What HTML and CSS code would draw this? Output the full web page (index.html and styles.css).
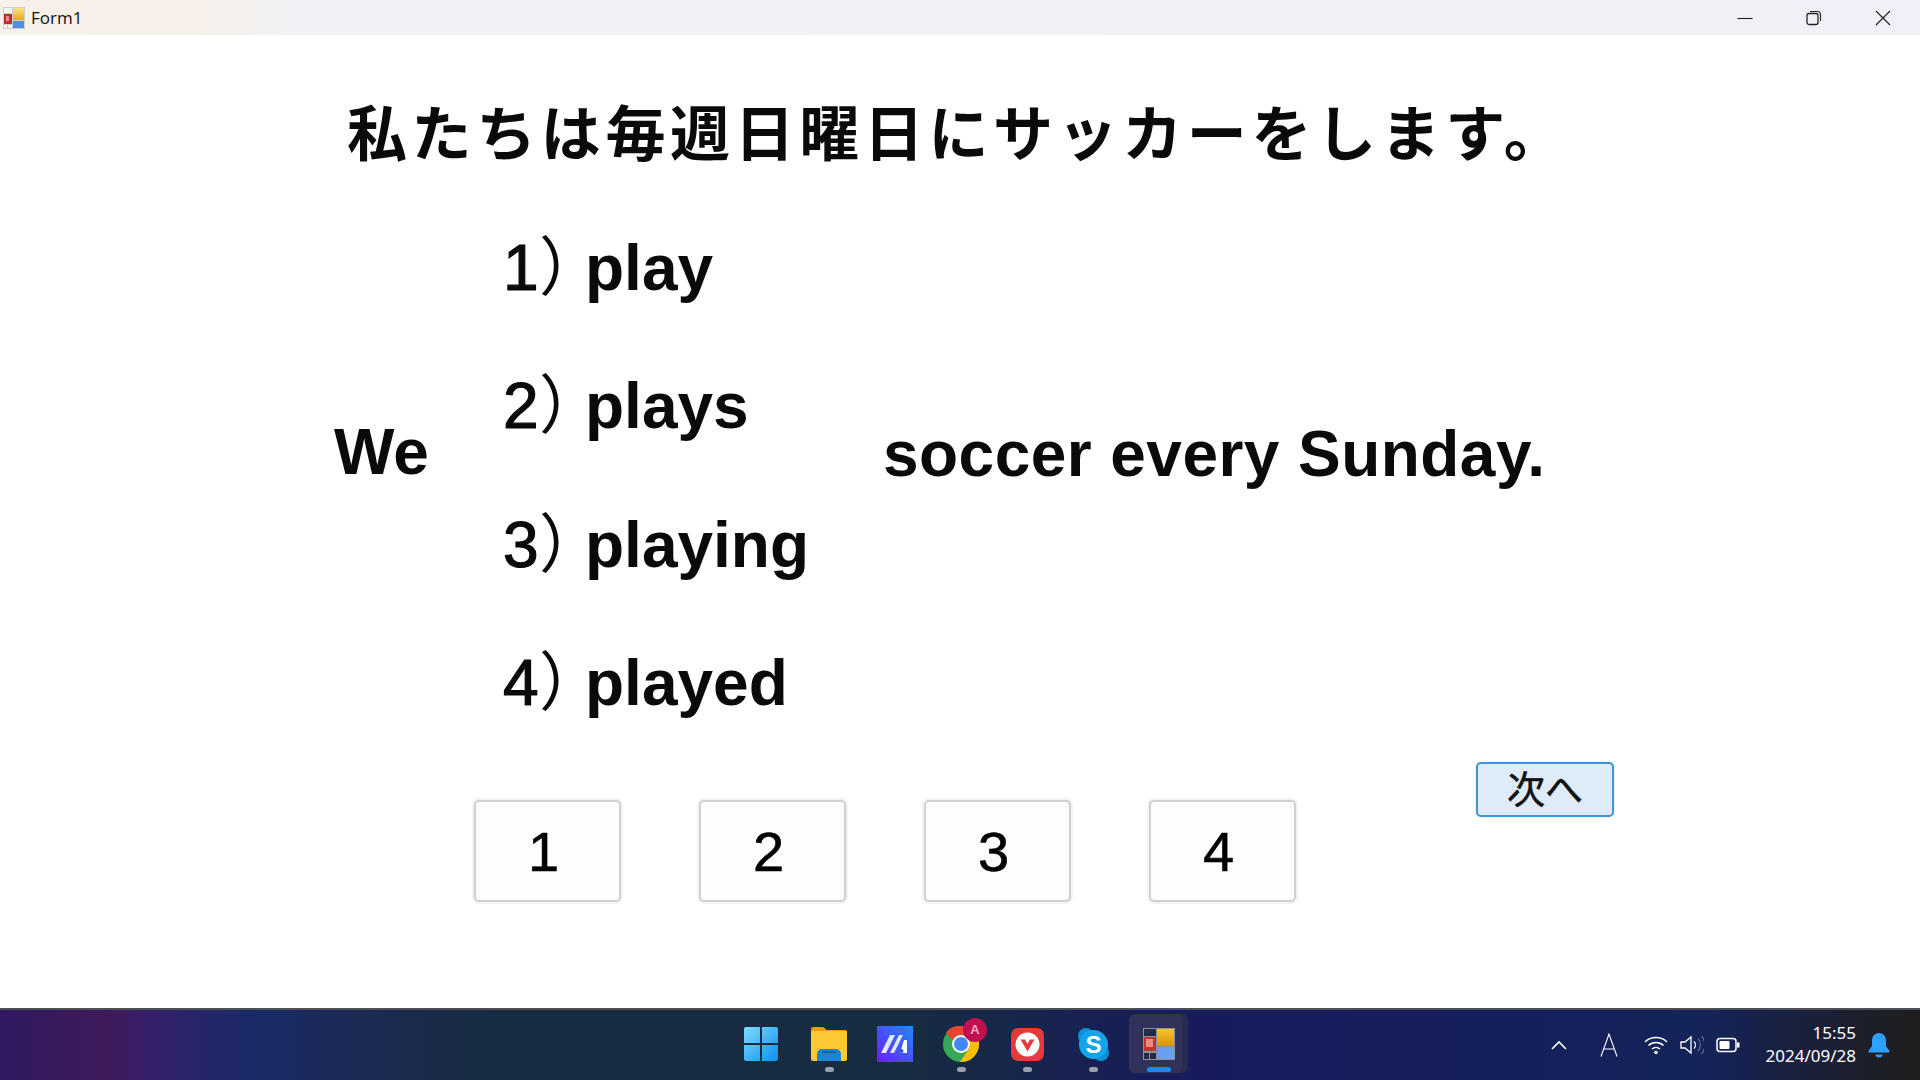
FILE: index.html
```html
<!DOCTYPE html>
<html lang="ja">
<head>
<meta charset="utf-8">
<title>Form1</title>
<link rel="stylesheet" href="styles.css">
</head>
<body>
<div class="window">
  <header class="titlebar">
    <div class="title-left">
      <svg class="form-icon" width="22" height="22" viewBox="0 0 22 22">
        <defs><linearGradient id="fy" x1="0" y1="0" x2="0" y2="1"><stop offset="0" stop-color="#fbe08a"/><stop offset="1" stop-color="#e8a818"/></linearGradient></defs>
        <rect x="0" y="0" width="22" height="22" fill="#cfcfcf"/>
        <rect x="1" y="1" width="8" height="5" fill="#f4f4f4"/>
        <rect x="1" y="7" width="8" height="10" fill="#b8322a"/>
        <rect x="3" y="9" width="3" height="5" fill="#e88"/>
        <rect x="1" y="18" width="3" height="3" fill="#f4f4f4"/>
        <rect x="5" y="18" width="4" height="3" fill="#f4f4f4"/>
        <rect x="10" y="1" width="11" height="12" fill="url(#fy)"/>
        <rect x="10" y="14" width="11" height="7" fill="#4f8fe0"/>
      </svg>
      <span class="title-text">Form1</span>
    </div>
    <div class="win-controls">
      <svg width="16" height="16" viewBox="0 0 16 16"><path d="M0.5 8.5h15" stroke="#222" stroke-width="1.1" fill="none"/></svg>
      <svg width="16" height="16" viewBox="0 0 16 16"><rect x="1" y="3.5" width="11" height="11" rx="2" stroke="#222" stroke-width="1.3" fill="none"/><path d="M4 1.5h7.5a3 3 0 0 1 3 3V11" stroke="#222" stroke-width="1.1" fill="none"/></svg>
      <svg width="16" height="16" viewBox="0 0 16 16"><path d="M1 1l14 14M15 1L1 15" stroke="#222" stroke-width="1.2" fill="none"/></svg>
    </div>
  </header>

  <main class="form">
    <h1 class="question">私たちは毎週日曜日にサッカーをします。</h1>
    <div class="sentence">
      <span class="word-we">We</span>
      <ol class="options">
        <li><span class="num">1</span><span class="paren">）</span>play</li>
        <li><span class="num">2</span><span class="paren">）</span>plays</li>
        <li><span class="num">3</span><span class="paren">）</span>playing</li>
        <li><span class="num">4</span><span class="paren">）</span>played</li>
      </ol>
      <span class="word-rest">soccer every Sunday.</span>
    </div>
    <div class="actions">
      <button class="answer">1</button>
      <button class="answer">2</button>
      <button class="answer">3</button>
      <button class="answer">4</button>
      <button class="next">次へ</button>
    </div>
  </main>

  <footer class="taskbar">
    <div class="task-icons">
      <div class="task-item start">
        <svg width="36" height="36" viewBox="0 0 36 36">
          <defs><linearGradient id="w" x1="0" y1="0" x2="1" y2="1"><stop offset="0" stop-color="#7fdcff"/><stop offset="1" stop-color="#0d8ef0"/></linearGradient></defs>
          <path d="M1 3a2 2 0 0 1 2-2h14v16H1zM19 1h14a2 2 0 0 1 2 2v14H19zM1 19h16v16H3a2 2 0 0 1-2-2zM19 19h16v14a2 2 0 0 1-2 2H19z" fill="url(#w)"/>
        </svg>
      </div>
      <div class="task-item running">
        <svg width="36" height="34" viewBox="0 0 36 34">
          <path d="M0 2a2 2 0 0 1 2-2h10l4 3h18a2 2 0 0 1 2 2v4H0z" fill="#e0a000"/>
          <path d="M0 4h36v28a2 2 0 0 1-2 2H2a2 2 0 0 1-2-2z" fill="#fcc934"/>
          <path d="M6 27a5 5 0 0 1 5-5h14a5 5 0 0 1 5 5v7H6z" fill="#1b86cc"/>
          <path d="M11 25h14" stroke="#0c5a96" stroke-width="1.5"/>
        </svg>
      </div>
      <div class="task-item">
        <svg width="36" height="36" viewBox="0 0 36 36">
          <defs><linearGradient id="m" x1="1" y1="0" x2="0" y2="1"><stop offset="0" stop-color="#1d8cff"/><stop offset="1" stop-color="#6a1cf5"/></linearGradient></defs>
          <rect width="36" height="36" fill="url(#m)"/>
          <path d="M4 27L13 9h5L9 27zM13 27L22 9h4l-9 18z" fill="#dfe6ff"/>
          <path d="M23 27l4-13h3v13z" fill="#fff"/>
          <circle cx="24.500" cy="25" r="2" fill="#2a50ff"/>
        </svg>
      </div>
      <div class="task-item running has-badge">
        <svg width="36" height="36" viewBox="0 0 36 36">
          <circle cx="18" cy="18" r="18" fill="#34a853"/>
          <path d="M18 0a18 18 0 0 1 15.6 9H18a9 9 0 0 0-8.3 5.5L3 6.5A18 18 0 0 1 18 0z" fill="#ea4335"/>
          <path d="M33.600 9A18 18 0 0 1 17 36l8.800-13.500A9 9 0 0 0 26 13z" fill="#fbbc04"/>
          <circle cx="18" cy="18" r="9" fill="#fff"/>
          <circle cx="18" cy="18" r="7" fill="#4285f4"/>
        </svg>
        <span class="badge">A</span>
      </div>
      <div class="task-item running">
        <svg width="33" height="33" viewBox="0 0 33 33">
          <rect width="33" height="33" rx="7" fill="#e5393a"/>
          <circle cx="16.500" cy="16.500" r="12" fill="#fff"/>
          <path d="M9.500 11.500l7 12 7-12h-4.500l-2.500 4.500-2.500-4.500z" fill="#e5393a"/>
        </svg>
      </div>
      <div class="task-item running">
        <svg width="33" height="33" viewBox="0 0 33 33">
          <circle cx="9" cy="8" r="8" fill="#0d8fd8"/>
          <circle cx="24" cy="25" r="8" fill="#0d8fd8"/>
          <circle cx="16.500" cy="16.500" r="14.500" fill="#12a5ea"/>
          <text x="16.500" y="24.500" class="skype-s" text-anchor="middle">S</text>
        </svg>
      </div>
      <div class="task-item active">
        <span class="stack-back"></span>
        <span class="stack-front"></span>
        <svg width="32" height="32" viewBox="0 0 32 32">
          <defs><linearGradient id="ty" x1="0" y1="0" x2="0" y2="1"><stop offset="0" stop-color="#f4c430"/><stop offset="1" stop-color="#d89400"/></linearGradient></defs>
          <rect width="32" height="32" fill="#8c8f9c"/>
          <rect x="1" y="1" width="12" height="7" fill="#252a4a"/>
          <rect x="1" y="9" width="12" height="14" fill="#c0352c"/>
          <rect x="3" y="11" width="7" height="8" fill="#e88a80"/>
          <rect x="1" y="25" width="5" height="6" fill="#252a4a"/>
          <rect x="7" y="25" width="6" height="6" fill="#252a4a"/>
          <rect x="14" y="1" width="17" height="17" fill="url(#ty)"/>
          <rect x="15" y="19" width="16" height="12" fill="#6a9ff0"/>
        </svg>
      </div>
    </div>
    <div class="tray">
      <svg width="16" height="10" viewBox="0 0 16 10"><path d="M1 9l7-7 7 7" stroke="#fff" stroke-width="1.6" fill="none"/></svg>
      <svg class="tray-a" width="18" height="24" viewBox="0 0 18 24"><path d="M1 23.500L9 1l8 22.500M3.500 16h11" stroke="#fff" stroke-width="1.1" fill="none"/></svg>
      <div class="tray-status">
        <svg width="24" height="20" viewBox="0 0 24 20"><path d="M1 7a16 16 0 0 1 22 0M4.500 10.500a11 11 0 0 1 15 0M8 14a6 6 0 0 1 8 0" stroke="#fff" stroke-width="1.500" fill="none"/><circle cx="12" cy="17.500" r="1.800" fill="#fff"/></svg>
        <svg width="24" height="20" viewBox="0 0 24 20"><path d="M1 7h4l6-5v16l-6-5H1z" stroke="#fff" stroke-width="1.300" fill="none"/><path d="M14 6.500a5 5 0 0 1 0 7" stroke="#fff" stroke-width="1.300" fill="none"/><path d="M18 3.500a10 10 0 0 1 0 13M21.500 1a14 14 0 0 1 0 18" stroke="#6b7088" stroke-width="1.100" fill="none"/></svg>
        <svg width="24" height="16" viewBox="0 0 24 16"><rect x="1" y="1.500" width="19" height="13" rx="3" stroke="#fff" stroke-width="1.500" fill="none"/><rect x="3.500" y="4" width="10" height="8" rx="1" fill="#fff"/><rect x="21" y="5.500" width="2.500" height="5" fill="#fff"/></svg>
      </div>
      <div class="clock"><span>15:55</span><span>2024/09/28</span></div>
      <svg class="bell" width="22" height="26" viewBox="0 0 22 26"><path d="M11 1a7 7 0 0 1 7 7v6l3.500 5a1 1 0 0 1-1 1.500H1.500a1 1 0 0 1-1-1.500L4 14V8a7 7 0 0 1 7-7z" fill="#2ea0ff"/><path d="M7.500 22.500h7a3.500 3 0 0 1-7 0z" fill="#2ea0ff"/></svg>
    </div>
  </footer>
</div>
</body>
</html>
```
FILE: styles.css
```css
* { box-sizing: border-box; }
html, body { margin: 0; padding: 0; }
body { width: 1920px; height: 1080px; overflow: hidden; background: #fff; font-family: "Noto Sans CJK JP", "Noto Sans", sans-serif; }
.window { width: 1920px; height: 1080px; display: flex; flex-direction: column; }

.titlebar { height: 35px; flex: none; display: flex; justify-content: space-between; align-items: center; background: linear-gradient(90deg, #f8f1e9 0, #f7f0e8 190px, #f1f1f8 320px, #f0f1f8 100%); }
.title-left { display: flex; align-items: center; padding-left: 3px; gap: 6px; }
.title-text { font-family: "Open Sans", "Noto Sans", sans-serif; font-size: 17px; color: #111; }
.win-controls { display: flex; gap: 53px; padding-right: 29px; }
.win-controls svg { display: block; }

.form { flex: 1; display: flex; flex-direction: column; min-height: 0; }
.question { margin: 59px 0 0 347px; font-size: 60px; letter-spacing: 4.600px; line-height: 72px; font-weight: 700; color: #0a0a0a; white-space: nowrap; }
.sentence { display: flex; align-items: flex-start; margin-top: 56px; font-family: "Liberation Sans", sans-serif; font-size: 64px; line-height: 80px; font-weight: 700; color: #0a0a0a; }
.word-we { margin: 190px 0 0 334px; width: 169px; }
.word-rest { margin: 192px 0 0 0; letter-spacing: 0.450px; white-space: nowrap; }
.options { list-style: none; margin: 0; padding: 0; width: 380px; display: flex; flex-direction: column; gap: 58.400px; }
.options li { height: 80px; white-space: nowrap; }
.num { display: inline-block; width: 36px; font-weight: 400; -webkit-text-stroke: 1.200px #0a0a0a; }
.paren { letter-spacing: -18px; font-family: "Noto Sans CJK JP", sans-serif; font-weight: 400; }
.actions { display: flex; align-items: flex-start; margin-top: 45px; padding-left: 474px; }
.answer { width: 147px; height: 102px; margin: 38px 78px 0 0; padding: 0 8px 0 0; border: 2px solid #d0d0d0; border-radius: 5px; background: #fdfdfd; font-family: "Liberation Sans", sans-serif; font-size: 56px; color: #000; -webkit-text-stroke: 0.600px #000; box-shadow: 0 0 0 2px #f3f3f3; }
.next { width: 138px; height: 55px; margin-left: 102px; padding: 0 0 5px; border: 2px solid #3d95dc; border-radius: 5px; background: #deecf9; font-family: "Noto Sans CJK JP", sans-serif; font-size: 38px; line-height: 1; color: #111; -webkit-text-stroke: 0.500px #111; box-shadow: 0 0 0 1px #f0f0f0; }

.taskbar { height: 72px; flex: none; position: relative; display: flex; align-items: center; border-top: 2px solid #4e5058; background: linear-gradient(90deg, #2e1a60 0, #3f1a5a 105px, #35206a 150px, #1a2a68 250px, #1c2a55 350px, #172c40 500px, #172c40 900px, #171b5c 1200px, #14235a 1700px, #1e1e20 1900px); }
.task-icons { position: absolute; left: 728px; top: 0; height: 70px; display: flex; align-items: center; }
.task-item { position: relative; width: 66px; height: 70px; display: flex; align-items: center; justify-content: center; padding-bottom: 2px; }
.task-item.start { margin-right: 2px; }
.task-item.running::after { content: ""; position: absolute; left: 29px; bottom: 8px; width: 9px; height: 5px; border-radius: 3px; background: #9aa0aa; }
.task-item.active svg { position: relative; }
.stack-back { position: absolute; left: 8px; top: 4px; width: 54px; height: 59px; border-radius: 6px; background: #2a2b50; }
.stack-front { position: absolute; left: 3px; top: 4px; width: 53px; height: 59px; border-radius: 6px; background: #31325a; }
.task-item.active::after { content: ""; position: absolute; left: 21px; bottom: 8px; width: 24px; height: 5px; border-radius: 3px; background: #0d8ef0; }
.badge { position: absolute; left: 35px; top: 8px; width: 24px; height: 24px; border-radius: 50%; background: #c0104f; color: #f3a6c0; font-family: "Liberation Sans", sans-serif; font-size: 13px; line-height: 24px; text-align: center; font-weight: 700; }
.skype-s { font-family: "Liberation Sans", sans-serif; font-size: 24px; font-weight: 700; fill: #fff; }
.tray { margin-left: auto; height: 70px; display: flex; align-items: center; padding-right: 30px; color: #fff; }
.tray-a { margin-left: 33px; }
.tray-status { display: flex; align-items: center; gap: 12px; margin-left: 26px; }
.clock { display: flex; flex-direction: column; align-items: flex-end; margin-left: 26px; padding-bottom: 3px; font-family: "Noto Sans", sans-serif; font-size: 17px; line-height: 23px; }
.bell { margin-left: 12px; }
```
